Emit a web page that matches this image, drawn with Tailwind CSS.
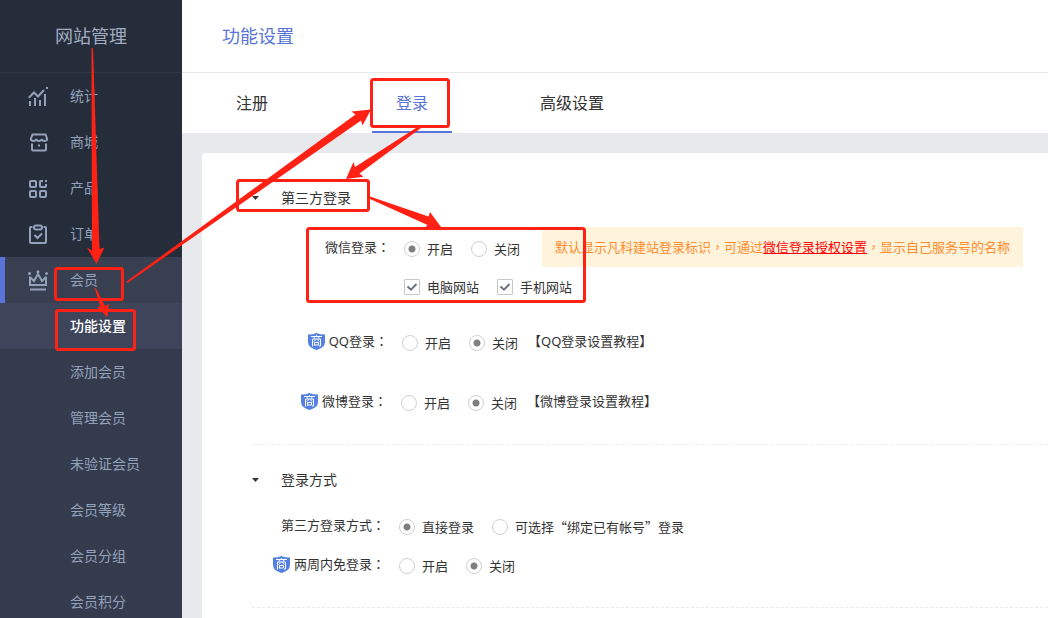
<!DOCTYPE html>
<html lang="zh-CN">
<head>
<meta charset="utf-8">
<meta name="viewport" content="width=device-width, initial-scale=1">
<title>功能设置</title>
<script src="https://cdn.jsdelivr.net/npm/@tailwindcss/browser@4"></script>
</head>
<body class="relative h-screen overflow-hidden bg-[#e8e9ed] font-['Noto_Sans','Noto_Sans_CJK_SC',sans-serif] text-[13px] leading-5 text-[#333]">
<svg class="hidden">
  <symbol id="shield" viewBox="0 0 17 17">
    <path fill="#5580e3" d="M0 1.500Q5 1.600 8.500 0Q12 1.600 17 1.500V9Q17 14.500 8.500 17Q0 14.500 0 9Z"/>
    <path fill="none" stroke="#fff" d="M3 3.500h11M8.500 2v2M6 4l.7 1.500M11 4l-.7 1.500M4.500 13.500V6h8v7h-1.500M7.500 6.500L6 8.500M9.500 6.500l1.500 2M6.500 12.500V9.500h4v2.500H6.500"/>
  </symbol>
  <symbol id="tick" viewBox="0 0 16 16">
    <path fill="none" stroke="#6b7280" stroke-width="2" d="M3.500 7.500L7 10.700L12.500 5"/>
  </symbol>
</svg>

<div class="flex h-full">
  <aside class="flex w-[182px] shrink-0 flex-col bg-[#262d3a] text-sm text-[#93a1ba]">
    <h1 class="flex h-[73px] shrink-0 items-center justify-center border-b border-[#2d3844] text-lg text-[#a0acc2]">网站管理</h1>
    <nav class="flex grow flex-col">
      <a href="#" class="flex h-[46px] shrink-0 items-center gap-[21px] pl-7">
        <svg class="size-[21px]" viewBox="0 0 21 21" fill="none" stroke="currentColor" stroke-width="2"><path d="M2 20v-5M7 20v-8M12 20v-6M17 20V8M.8 11.700L6 6.500l4 4L16 4M18 2h2"/></svg>统计</a>
      <a href="#" class="flex h-[46px] shrink-0 items-center gap-[21px] pl-7">
        <svg class="size-[21px]" viewBox="0 0 21 21" fill="none" stroke="currentColor" stroke-width="2"><path d="M4.500 2.500h13l1.700 4.500q-.5 2-2.700 2t-2.700-2q-.5 2-2.800 2T8.200 7q-.5 2-2.700 2T2.800 7ZM4 11.500v6q0 1 1 1h12q1 0 1-1v-6M10 13.500h2"/></svg>商城</a>
      <a href="#" class="flex h-[46px] shrink-0 items-center gap-[21px] pl-7">
        <svg class="size-[21px]" viewBox="0 0 21 21" fill="none" stroke="currentColor" stroke-width="2"><rect x="2" y="3" width="6" height="6" rx="1"/><rect x="2" y="13" width="6" height="6" rx="1"/><rect x="12" y="13" width="6" height="6" rx="1"/><path d="M15 3h-2q-1 0-1 1v4q0 1 1 1h4q1 0 1-1V6M17 3h2"/></svg>产品</a>
      <a href="#" class="flex h-[46px] shrink-0 items-center gap-[21px] pl-7">
        <svg class="size-[21px]" viewBox="0 0 21 21" fill="none" stroke="currentColor" stroke-width="2"><path d="M4.500 3H3q-1 0-1 1v14q0 1 1 1h14q1 0 1-1V4q0-1-1-1h-1.500M6.500 11l3 3 4.500-4.500"/><rect x="6" y="1.500" width="8" height="4" rx="2"/></svg>订单</a>
      <div class="flex grow flex-col bg-[#343b4d]">
        <a href="#" class="flex h-[46px] shrink-0 items-center gap-[21px] border-l-[5px] border-[#5874d8] bg-[#383f50] pl-[23px]">
          <svg class="size-[21px]" viewBox="0 0 21 21" fill="none" stroke="currentColor" stroke-width="2"><path d="M2 6.500V15h16V6.500M2.500 7.500l3.500 3.500L10 4l4 7 3.500-3.500M2 19.500h16"/><g fill="currentColor" stroke="none"><circle cx="1.500" cy="3.500" r="1.500"/><circle cx="18.500" cy="3.500" r="1.500"/><circle cx="10" cy="1.700" r="1.500"/></g></svg>会员</a>
        <a href="#" class="flex h-[46px] shrink-0 items-center bg-[#3e4459] pl-[70px] font-medium text-white">功能设置</a>
        <a href="#" class="flex h-[46px] shrink-0 items-center pl-[70px]">添加会员</a>
        <a href="#" class="flex h-[46px] shrink-0 items-center pl-[70px]">管理会员</a>
        <a href="#" class="flex h-[46px] shrink-0 items-center pl-[70px]">未验证会员</a>
        <a href="#" class="flex h-[46px] shrink-0 items-center pl-[70px]">会员等级</a>
        <a href="#" class="flex h-[46px] shrink-0 items-center pl-[70px]">会员分组</a>
        <a href="#" class="flex h-[46px] shrink-0 items-center pl-[70px]">会员积分</a>
      </div>
    </nav>
  </aside>

  <main class="flex min-w-0 grow flex-col">
    <header class="flex h-[73px] shrink-0 items-center border-b border-[#e8e9ed] bg-white pl-10">
      <h2 class="text-lg text-[#5874d8]">功能设置</h2>
    </header>
    <nav class="flex h-[60px] shrink-0 gap-20 bg-white pl-[30px] text-base">
      <a href="#" class="flex w-20 items-center justify-center border-y-2 border-transparent">注册</a>
      <a href="#" class="flex w-20 items-center justify-center border-y-2 border-t-transparent border-b-[#5874d8] text-[#5874d8]">登录</a>
      <a href="#" class="flex w-20 items-center justify-center border-y-2 border-transparent">高级设置</a>
    </nav>

    <div class="mt-5 ml-5 grow rounded-tl bg-white pl-[50px]">
      <section class="border-b border-dashed border-[#ebebeb] pt-[35px] pb-[29px]">
        <button type="button" class="flex items-center gap-[22px] text-sm">
          <svg class="h-1 w-[7px]" viewBox="0 0 7 4" fill="#333"><path d="M0 0h7L3.500 4Z"/></svg>第三方登录</button>

        <div class="mt-[19px] flex items-start">
          <fieldset class="flex items-start gap-[14px]">
            <legend class="float-left w-[138px] pt-2.5 text-right">微信登录<span lang="zh-TW" class="font-['Noto_Sans_CJK_TC',sans-serif]">：</span></legend>
            <div class="flex flex-col pt-3">
              <div class="flex gap-[18px]">
                <label class="flex items-center gap-[7px]"><input type="radio" name="wechat" checked class="size-4 appearance-none rounded-full border border-[#d0d0d0] checked:bg-[radial-gradient(circle,#808080_3px,transparent_4px)]">开启</label>
                <label class="flex items-center gap-[7px]"><input type="radio" name="wechat" class="size-4 appearance-none rounded-full border border-[#d0d0d0] checked:bg-[radial-gradient(circle,#808080_3px,transparent_4px)]">关闭</label>
              </div>
              <div class="mt-[18px] flex gap-[18px]">
                <label class="flex items-center gap-[7px]"><span class="grid size-4"><input type="checkbox" checked class="peer col-start-1 row-start-1 size-4 appearance-none rounded-[1px] border border-[#c8c8c8]"><svg class="pointer-events-none invisible col-start-1 row-start-1 size-4 peer-checked:visible"><use href="#tick"/></svg></span>电脑网站</label>
                <label class="flex items-center gap-[7px]"><span class="grid size-4"><input type="checkbox" checked class="peer col-start-1 row-start-1 size-4 appearance-none rounded-[1px] border border-[#c8c8c8]"><svg class="pointer-events-none invisible col-start-1 row-start-1 size-4 peer-checked:visible"><use href="#tick"/></svg></span>手机网站</label>
              </div>
            </div>
          </fieldset>
          <p class="-ml-[30px] bg-[#fff3db] px-[13px] py-2.5 whitespace-nowrap text-[#ff8b2b]">默认显示凡科建站登录标识<span lang="zh-TW" class="font-['Noto_Sans_CJK_TC',sans-serif]">，</span>可通过<a href="#" class="text-[#f00] underline">微信登录授权设置</a><span lang="zh-TW" class="font-['Noto_Sans_CJK_TC',sans-serif]">，</span>显示自己服务号的名称</p>
        </div>

        <fieldset class="mt-[34px] flex items-center gap-[14px]">
          <legend class="float-left flex w-[136px] items-center justify-end gap-1 pb-1"><svg class="size-[17px]"><use href="#shield"/></svg><span>QQ登录<span lang="zh-TW" class="font-['Noto_Sans_CJK_TC',sans-serif]">：</span></span></legend>
          <div class="flex gap-[18px]">
            <label class="flex items-center gap-[7px]"><input type="radio" name="qq" class="size-4 appearance-none rounded-full border border-[#d0d0d0] checked:bg-[radial-gradient(circle,#808080_3px,transparent_4px)]">开启</label>
            <label class="flex items-center gap-[7px]"><input type="radio" name="qq" checked class="size-4 appearance-none rounded-full border border-[#d0d0d0] checked:bg-[radial-gradient(circle,#808080_3px,transparent_4px)]">关闭</label>
          </div>
          <a href="#" class="-ml-1 pb-1">【QQ登录设置教程】</a>
        </fieldset>

        <fieldset class="mt-9 flex items-center gap-[14px]">
          <legend class="float-left flex w-[135px] items-center justify-end gap-1 pb-1"><svg class="size-[17px]"><use href="#shield"/></svg><span>微博登录<span lang="zh-TW" class="font-['Noto_Sans_CJK_TC',sans-serif]">：</span></span></legend>
          <div class="flex gap-[18px]">
            <label class="flex items-center gap-[7px]"><input type="radio" name="weibo" class="size-4 appearance-none rounded-full border border-[#d0d0d0] checked:bg-[radial-gradient(circle,#808080_3px,transparent_4px)]">开启</label>
            <label class="flex items-center gap-[7px]"><input type="radio" name="weibo" checked class="size-4 appearance-none rounded-full border border-[#d0d0d0] checked:bg-[radial-gradient(circle,#808080_3px,transparent_4px)]">关闭</label>
          </div>
          <a href="#" class="-ml-1 pb-1">【微博登录设置教程】</a>
        </fieldset>
      </section>

      <section class="border-b border-dashed border-[#ebebeb] pt-[25px] pb-[29px]">
        <button type="button" class="flex items-center gap-[22px] text-sm">
          <svg class="h-1 w-[7px]" viewBox="0 0 7 4" fill="#333"><path d="M0 0h7L3.500 4Z"/></svg>登录方式</button>

        <fieldset class="mt-[25px] flex items-center gap-[14px]">
          <legend class="float-left w-[133px] pb-1 text-right">第三方登录方式<span lang="zh-TW" class="font-['Noto_Sans_CJK_TC',sans-serif]">：</span></legend>
          <div class="flex gap-[18px]">
            <label class="flex items-center gap-[7px]"><input type="radio" name="mode" checked class="size-4 appearance-none rounded-full border border-[#d0d0d0] checked:bg-[radial-gradient(circle,#808080_3px,transparent_4px)]">直接登录</label>
            <label class="flex items-center gap-[7px] font-['Noto_Sans_CJK_SC',sans-serif]"><input type="radio" name="mode" class="size-4 appearance-none rounded-full border border-[#d0d0d0] checked:bg-[radial-gradient(circle,#808080_3px,transparent_4px)]">可选择“绑定已有帐号”登录</label>
          </div>
        </fieldset>

        <fieldset class="mt-[15px] flex items-center gap-[14px]">
          <legend class="float-left flex w-[133px] items-center justify-end gap-1 pb-1"><svg class="size-[17px]"><use href="#shield"/></svg><span>两周内免登录<span lang="zh-TW" class="font-['Noto_Sans_CJK_TC',sans-serif]">：</span></span></legend>
          <div class="flex gap-[18px]">
            <label class="flex items-center gap-[7px]"><input type="radio" name="keep" class="size-4 appearance-none rounded-full border border-[#d0d0d0] checked:bg-[radial-gradient(circle,#808080_3px,transparent_4px)]">开启</label>
            <label class="flex items-center gap-[7px]"><input type="radio" name="keep" checked class="size-4 appearance-none rounded-full border border-[#d0d0d0] checked:bg-[radial-gradient(circle,#808080_3px,transparent_4px)]">关闭</label>
          </div>
        </fieldset>
      </section>
    </div>
  </main>
</div>

<!-- Guide marks: boxes and arrows over the page -->
<svg class="pointer-events-none absolute top-0 left-0 h-[618px] w-[1048px]" viewBox="0 0 1048 618" aria-hidden="true">
  <g fill="none" stroke="#ff2214" stroke-width="3">
    <rect x="55.500" y="268.500" width="67" height="31" rx="2"/>
    <rect x="56.500" y="310.500" width="78" height="39" rx="2"/>
    <rect x="371.500" y="79.500" width="77" height="47" rx="2"/>
    <rect x="237.500" y="180.500" width="131" height="30" rx="2"/>
    <rect x="307.500" y="228.500" width="277" height="73" rx="2"/>
  </g>
  <g fill="#ff2214">
    <path d="M91.500 48H93L99.500 249L104.500 247.500L96.500 264L87 247.500L92 250.500Z"/>
    <path d="M94.500 288L96 288.500L105 306L109 304L107.300 317L97 307L100.500 306.500Z"/>
    <path d="M126.500 281.500L355.500 114.500L351.500 111.500L371 109.500L362.500 125.500L361 120.500L127.500 283Z"/>
    <path d="M416 128L355 167L353.500 162L346 179L363.500 176.700L359.500 173.500L421 128Z"/>
    <path d="M370 196.500L428.500 216.500L430 212L441 227H425.500L427.500 225L370 199Z"/>
  </g>
</svg>
</body>
</html>
